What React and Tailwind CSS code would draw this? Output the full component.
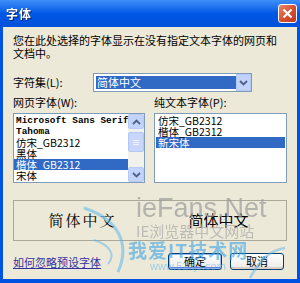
import React from 'react';

const ui = { fontFamily: "'Noto Sans CJK SC', 'Noto Sans', sans-serif" };
const mono = { fontFamily: "'Liberation Mono', 'Noto Sans CJK SC', monospace" };

function Item({ text, selected, latin }) {
  return (
    <div
      className={`h-[11px] leading-[11px] pl-[2px] whitespace-nowrap ${selected ? 'bg-[#316AC5] text-white' : 'text-black'} ${latin ? 'font-bold' : ''}`}
      style={latin ? { ...mono, fontSize: '9.4px' } : { ...ui, fontSize: '10.5px' }}
    >
      {text}
    </div>
  );
}

function Chevron({ up }) {
  return (
    <svg width="9" height="6" viewBox="0 0 9 6">
      <path d={up ? 'M1 5 L4.5 1.5 L8 5' : 'M1 1 L4.5 4.5 L8 1'} fill="none" stroke="#4D6185" strokeWidth="1.8" />
    </svg>
  );
}

function XpButton({ children, isDefault }) {
  return (
    <button
      className={`w-[54px] h-[17px] rounded-[3px] border border-[#003C74] bg-gradient-to-b from-white to-[#ECEBE6] text-[11px] leading-[15px] text-black flex items-center justify-center ${isDefault ? 'shadow-[inset_0_0_0_1px_#98B8EA,inset_0_-1px_0_1px_#5A7EDC]' : 'shadow-[inset_0_-2px_0_#D6D0C5]'}`}
      style={ui}
    >
      {children}
    </button>
  );
}

export default function App() {
  const webFonts = [
    { t: 'Microsoft Sans Serif', latin: true },
    { t: 'Tahoma', latin: true },
    { t: '仿宋_GB2312' },
    { t: '黑体' },
    { t: '楷体_GB2312', sel: true },
    { t: '宋体' },
  ];
  const plainFonts = [{ t: '仿宋_GB2312' }, { t: '楷体_GB2312' }, { t: '新宋体', sel: true }];

  return (
    <div className="relative w-[300px] h-[283px] flex flex-col bg-[#0053E1] overflow-hidden" style={ui}>
      {/* title bar */}
      <div className="h-[27px] flex items-center justify-between px-[6px] bg-gradient-to-b from-[#3D8EF8] via-[#0058E6] to-[#0050DA]">
        <span className="text-white text-[12px] font-bold tracking-[1px] drop-shadow-[1px_1px_0_#0A246A]">字体</span>
        <div className="w-[19px] h-[19px] mr-[-3px] rounded-[3px] border border-white bg-gradient-to-br from-[#E88A6E] via-[#D9502E] to-[#C13A1C] flex items-center justify-center">
          <svg width="11" height="11" viewBox="0 0 11 11">
            <path d="M1.5 1.5 L9.5 9.5 M9.5 1.5 L1.5 9.5" stroke="white" strokeWidth="2.2" />
          </svg>
        </div>
      </div>

      {/* body */}
      <div className="flex-1 mx-[3px] mb-[4px] bg-[#ECE9D8] px-[10px] flex flex-col text-[11px] text-black">
        <p className="mt-[7px] leading-[13px]">
          您在此处选择的字体显示在没有指定文本字体的网页和
          <br />
          文档中。
        </p>

        <div className="mt-[13px] flex items-center">
          <span className="w-[80px]">字符集(L):</span>
          <div className="w-[159px] h-[19px] border border-[#7F9DB9] bg-white flex items-center p-[2px]">
            <div className="flex-1 h-[13px] bg-[#316AC5] text-white leading-[13px] pl-[1px]">简体中文</div>
            <div className="w-[15px] h-[17px] -mr-[2px] bg-[#C1D3FB] border border-[#B4C8F6] flex items-center justify-center">
              <Chevron />
            </div>
          </div>
        </div>

        <div className="mt-[4px] flex leading-[13px]">
          <span className="w-[141px]">网页字体(W):</span>
          <span>纯文本字体(P):</span>
        </div>

        <div className="mt-[4px] flex gap-[9px]">
          <div className="w-[132px] h-[70px] border border-[#7F9DB9] bg-white flex">
            <div className="flex-1 pt-[1px] overflow-hidden">
              {webFonts.map((f, i) => (
                <Item key={i} text={f.t} selected={f.sel} latin={f.latin} />
              ))}
            </div>
            <div className="w-[16px] flex flex-col bg-[#F3F1EC]">
              <div className="h-[15px] bg-[#C3D4FC] border border-[#B7CAF5] rounded-[2px] flex items-center justify-center">
                <Chevron up />
              </div>
              <div className="h-[20px] mt-[3px] bg-[#C8D6FB] border border-[#B3C7F5] rounded-[2px] flex flex-col items-center justify-center gap-[1px]">
                <div className="w-[6px] h-[1px] bg-[#EEF4FE]" />
                <div className="w-[6px] h-[1px] bg-[#EEF4FE]" />
                <div className="w-[6px] h-[1px] bg-[#EEF4FE]" />
              </div>
              <div className="flex-1" />
              <div className="h-[15px] bg-[#C3D4FC] border border-[#B7CAF5] rounded-[2px] flex items-center justify-center">
                <Chevron />
              </div>
            </div>
          </div>
          <div className="w-[133px] h-[70px] border border-[#7F9DB9] bg-white pt-[1px] px-[1px]">
            {plainFonts.map((f, i) => (
              <Item key={i} text={f.t} selected={f.sel} />
            ))}
          </div>
        </div>

        <div className="mt-[17px] h-[41px] w-[274px] border border-[#ACA899] flex items-center">
          <span
            className="w-[137px] text-center text-[15px] tracking-[2px]"
            style={{ fontFamily: "'Noto Serif CJK SC', 'Noto Sans CJK SC', serif" }}
          >
            简体中文
          </span>
          <span className="flex-1 text-center text-[15px]">简体中文</span>
        </div>

        <div className="mt-[12px] flex items-center">
          <a className="text-[#3333A0] underline leading-[13px] mt-[1px]">如何忽略预设字体</a>
          <div className="ml-auto flex gap-[8px] mr-[3px]">
            <XpButton isDefault>确定</XpButton>
            <XpButton>取消</XpButton>
          </div>
        </div>
      </div>

      {/* watermark */}
      <div className="absolute left-[136px] top-[193px] pointer-events-none flex flex-col">
        <span className="text-[27px] leading-[30px] text-[#9C9C9C] opacity-70" style={{ fontFamily: "'Liberation Sans', sans-serif" }}>
          ieFans.Net
        </span>
        <span className="text-[15px] leading-[17px] text-[#A8A8A8] opacity-70 -mt-[1px]">IE浏览器中文网站</span>
      </div>
      <div className="absolute left-[128px] top-[239px] pointer-events-none flex flex-col">
        <span className="text-[19px] leading-[21px] font-bold text-[#3FA4E6] opacity-60 tracking-[1px]">我爱IT技术网</span>
        <span className="text-[11px] leading-[12px] text-[#5BB2EA] opacity-50 ml-[22px]" style={{ fontFamily: "'Liberation Sans', sans-serif" }}>
          www.52itjs.com
        </span>
      </div>
      <svg className="absolute left-[80px] top-[200px] pointer-events-none" width="210" height="80" viewBox="0 0 210 80">
        <path d="M4 8 C 40 20, 50 45, 38 72" fill="none" stroke="#5DB6EC" strokeWidth="3" opacity="0.55" />
        <path d="M14 40 C 30 45, 36 55, 28 64" fill="none" stroke="#5DB6EC" strokeWidth="2" opacity="0.5" />
        <path d="M205 48 C 190 50, 180 60, 170 78" fill="none" stroke="#5DB6EC" strokeWidth="2.5" opacity="0.5" />
      </svg>
    </div>
  );
}
